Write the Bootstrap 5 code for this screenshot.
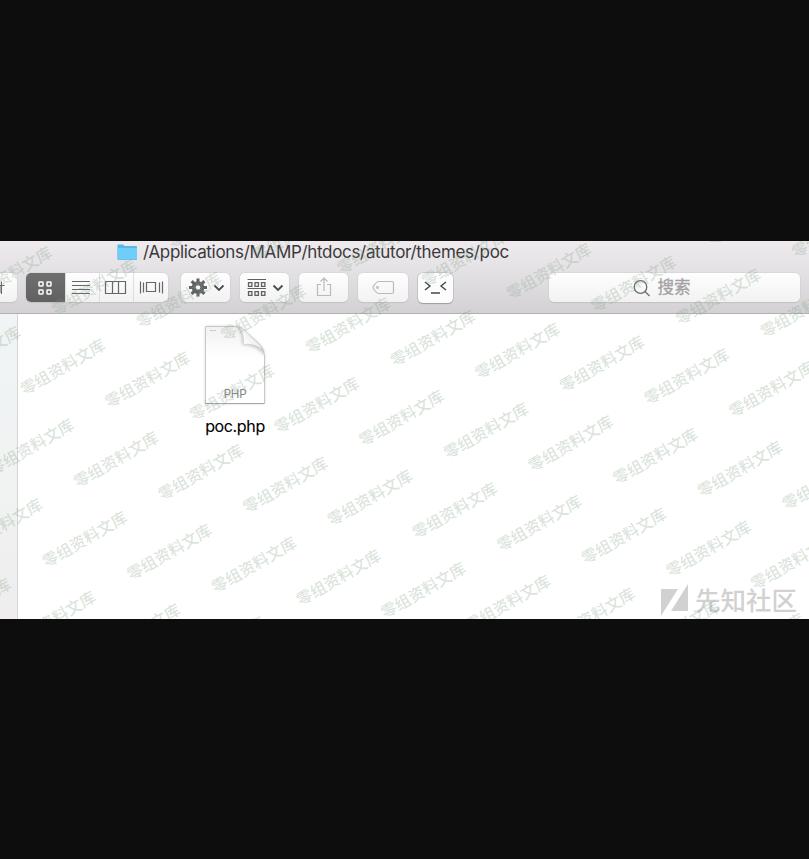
<!DOCTYPE html>
<html lang="zh-CN">
<head>
<meta charset="utf-8">
<meta name="viewport" content="width=device-width, initial-scale=1">
<title>poc</title>
<link href="https://cdn.jsdelivr.net/npm/bootstrap@5.3.0/dist/css/bootstrap.min.css" rel="stylesheet">
<style>
html,body{height:100%}
body{background:#0d0d0d;font-family:Inter,"Noto Sans CJK SC",sans-serif;overflow:hidden}
.finder{height:378px;margin-top:241px;background:#fff}
.chrome{height:73px;background:linear-gradient(#eeeaee 0,#e6e3e6 35%,#d3d1d4 100%);border-bottom:1px solid #b2b0b3}
.titlebar{height:22px;padding-left:117px;gap:5px}
.path-text{font-size:17px;line-height:22px;color:#3a383b;white-space:nowrap;letter-spacing:-.32px}
.tools{padding-top:10px;padding-right:9px}
.tool{height:29px;border-radius:5px;background:linear-gradient(#fefefe,#f2f2f2);box-shadow:0 0 0 .5px #cfcdd0,0 1px 1px #b8b6b9;padding:0;flex:none;color:#555}
.t-cut{width:17px;border-radius:0 5px 5px 0;margin-right:9px}
.t-views{width:142px;margin-right:13px;overflow:hidden}
.view{width:34px;height:29px;border-left:1px solid #dedede}
.view.on{width:39px;background:linear-gradient(#6f6f6f,#616161);color:#fff;border:0}
.view:last-child{width:35px}
.w50{width:49px}
.t-gear,.t-group,.t-share{margin-right:10px}
.t-tag{width:50px;margin-right:10px}
.t-poc{width:35px;height:30px;background:#fcfcfc;box-shadow:0 0 0 .5px #b5b3b6,0 1px 1px #8c8a8d}
.t-search{width:251px;color:#a3a1a4;font-size:16.600px;gap:6px;padding-right:25px}
.t-search span{-webkit-text-stroke:.3px #a3a1a4}
.side{width:18px;background:linear-gradient(#f0f4f4,#f1f3f3 50%,#efeded);border-right:1px solid #d6d6d6}
.file-item{width:84px;margin-left:175px;padding-top:10px}
.file-name{font-size:16px;line-height:20px;color:#000;margin-top:10px;letter-spacing:-.35px;-webkit-text-stroke:.1px #000}
.stamp{left:0;top:0;pointer-events:none}
.stamp text{font:500 15.800px "Noto Sans CJK SC",sans-serif;fill:#7fa086;fill-opacity:.3;text-anchor:middle}
.community{right:12px;bottom:1px;height:37px;color:#d1d1d1;font:500 25.500px/36px "Noto Sans CJK SC",sans-serif;gap:7px}
svg{display:block;flex:none}
</style>
<script src="https://cdn.jsdelivr.net/npm/bootstrap@5.3.0/dist/js/bootstrap.bundle.min.js"></script>
</head>
<body>
<main class="finder position-relative overflow-hidden d-flex flex-column">
  <header class="chrome flex-shrink-0">
    <div class="titlebar d-flex align-items-center">
      <svg width="21" height="17" viewBox="0 0 21 17"><path d="M.5 1.500Q.5 .5 1.500 .5H6l1.500 1.500H19Q20 2 20 3V15Q20 16 19 16H1.500Q.5 16 .5 15Z" fill="#55b9e9"/><path d="M.5 4H20V14.500Q20 15.500 19 15.500H1.500Q.5 15.500 .5 14.500Z" fill="#70cdf7"/></svg>
      <div class="path-text">/Applications/MAMP/htdocs/atutor/themes/poc</div>
    </div>
    <div class="tools d-flex">
      <div class="tool t-cut d-flex align-items-center"><svg width="17" height="29" fill="none" stroke="#666"><path d="M0 12.500H4.500M1.500 8.500V21M0 12.500V20"/></svg></div>
      <div class="tool t-views d-flex">
        <div class="view on"><svg width="39" height="29" fill="none" stroke="#fff" stroke-width="1.500"><rect x="13" y="9" width="4" height="4" rx=".7"/><rect x="21" y="9" width="4" height="4" rx=".7"/><rect x="13" y="17" width="4" height="4" rx=".7"/><rect x="21" y="17" width="4" height="4" rx=".7"/></svg></div>
        <div class="view"><svg width="33" height="29" stroke="#666" stroke-width="1.100"><path d="M6 8.500H24M6 12.500H24M6 16.500H24M6 20.500H24"/></svg></div>
        <div class="view"><svg width="33" height="29" fill="none" stroke="#666" stroke-width="1.200"><path d="M5.500 8.500H25.500V20.500H5.500ZM12.500 8.500V20.500M18.500 8.500V20.500"/></svg></div>
        <div class="view"><svg width="34" height="29" fill="none" stroke="#666" stroke-width="1.200"><path d="M12.500 9.500H21.500V18.500H12.500ZM6.500 8.500V20.500M9.500 9.500V19.500M25.500 9.500V19.500M28.500 8.500V20.500"/></svg></div>
      </div>
      <div class="tool w50 t-gear"><svg width="49" height="29"><g stroke="#626262" stroke-width="3"><path d="M17 5.500V23.500M8 14.500H26M10.640 8.140L23.360 20.860M23.360 8.140L10.640 20.860"/></g><circle cx="17" cy="14.500" r="6.300" fill="#626262"/><circle cx="17" cy="14.500" r="2.300" fill="#f8f8f8"/><path d="M33.500 12.500L38 17L42.500 12.500" fill="none" stroke="#4c4c4c" stroke-width="1.800"/></svg></div>
      <div class="tool w50 t-group"><svg width="49" height="29" fill="none" stroke="#606060"><path d="M7.500 6.500H26M7.500 15.500H26"/><path d="M8.500 9.700h3.400v3.600h-3.400zM15 9.700h3.400v3.600h-3.400zM21.500 9.700h3.400v3.600h-3.400zM8.500 18.700h3.400v3.600h-3.400zM15 18.700h3.400v3.600h-3.400zM21.500 18.700h3.400v3.600h-3.400z" stroke-width="1.300"/><path d="M33.500 12.500L38 17L42.500 12.500" stroke="#4c4c4c" stroke-width="1.800"/></svg></div>
      <div class="tool w50 t-share"><svg width="49" height="29" fill="none" stroke="#bababa" stroke-width="1.200"><path d="M22 11.500H18.500V22.500H31.500V11.500H28M25 18V5.500M21.500 8.500L25 5L28.500 8.500"/></svg></div>
      <div class="tool t-tag"><svg width="50" height="29" fill="none" stroke="#bababa" stroke-width="1.200"><path d="M20.500 8.500H34Q35.500 8.500 35.500 10V19Q35.500 20.500 34 20.500H20.500Q19 20.500 15.500 16Q14.500 14.500 15.500 13Q19 8.500 20.500 8.500Z"/><circle cx="19.500" cy="14.500" r=".8"/></svg></div>
      <div class="tool t-poc"><svg width="35" height="30" fill="none" stroke="#444" stroke-width="1.400"><path d="M7 9L12 13L7 17M28 9L23 13L28 17M13 20H22"/></svg></div>
      <div class="tool t-search ms-auto d-flex align-items-center justify-content-center"><svg width="18" height="18" fill="none" stroke="#6c6c6c" stroke-width="1.300"><circle cx="7.500" cy="8" r="6.300"/><path d="M12 12.500L16.500 17"/></svg><span>搜索</span></div>
    </div>
  </header>
  <section class="d-flex flex-grow-1">
    <aside class="side flex-shrink-0"></aside>
    <div class="file-item d-flex flex-column align-items-center">
      <svg width="64" height="82" viewBox="0 0 64 82">
        <defs><linearGradient id="paper" x1="0" y1="0" x2="0" y2="1"><stop offset="0" stop-color="#f1f1f1"/><stop offset=".4" stop-color="#fff"/></linearGradient><linearGradient id="fold" gradientUnits="userSpaceOnUse" x1="41" y1="20" x2="50" y2="11"><stop offset="0" stop-color="#fff"/><stop offset="1" stop-color="#ececec"/></linearGradient><filter id="soft" x="-30%" y="-30%" width="160%" height="160%"><feGaussianBlur stdDeviation="1.500"/></filter><clipPath id="sheet"><path d="M2.500 2.500H31Q37 2.500 41 6L57 21Q61.500 26 61.500 32V79.500H2.500Z"/></clipPath></defs>
        <path d="M2.500 2.500H31Q37 2.500 41 6L57 21Q61.500 26 61.500 32V79.500H2.500Z" fill="#999" filter="url(#soft)" opacity=".5"/>
        <path d="M2.500 2.500H31Q37 2.500 41 6L57 21Q61.500 26 61.500 32V79.500H2.500Z" fill="url(#paper)" stroke="#c8c8c8"/>
        <g clip-path="url(#sheet)"><path d="M33 2Q39 6 39.500 21Q52 20 61 31L63 22L42 2Z" fill="#bbb" filter="url(#soft)" opacity=".8"/></g>
        <path d="M36 3.500Q41 7 41 20Q52 19 59 25L57 21.500L42 7Q39 4 36 3.500Z" fill="url(#fold)"/>
        <path d="M7 6.500H13" stroke="#c4c4c4" stroke-dasharray="2 .5"/>
        <path d="M2.500 79.500H61.500" stroke="#a5a5a5"/>
        <text x="32" y="74" text-anchor="middle" font-family="Inter,sans-serif" font-size="11.500" letter-spacing="-.2" fill="#858585">PHP</text>
      </svg>
      <div class="file-name">poc.php</div>
    </div>
  </section>
  <div class="community position-absolute d-flex"><svg width="27" height="35" viewBox="0 0 27 35"><path d="M0 8H17L0 35ZM27 3V30H10Z" fill="#d1d1d1"/></svg><span>先知社区</span></div>
  <svg class="stamp position-absolute" id="stamp" width="809" height="378"></svg>
</main>
<script>
// Repeat the watermark on a slanted lattice across the window
const stamp = document.getElementById('stamp');
for (let r = -3; r < 5; r++) for (let c = -4; c < 13; c++) {
  const x = 62.7 + 84.65 * c - 31.4 * r, y = 125.9 + 12.75 * c + 79.75 * r;
  if (x < -42 || x > 851 || y < -27 || y > 405) continue;
  const t = document.createElementNS('http://www.w3.org/2000/svg', 'text');
  t.setAttribute('transform', `translate(${x} ${y}) rotate(-30)`);
  t.setAttribute('y', 6);
  t.textContent = '零组资料文库';
  stamp.append(t);
}
</script>
</body>
</html>
